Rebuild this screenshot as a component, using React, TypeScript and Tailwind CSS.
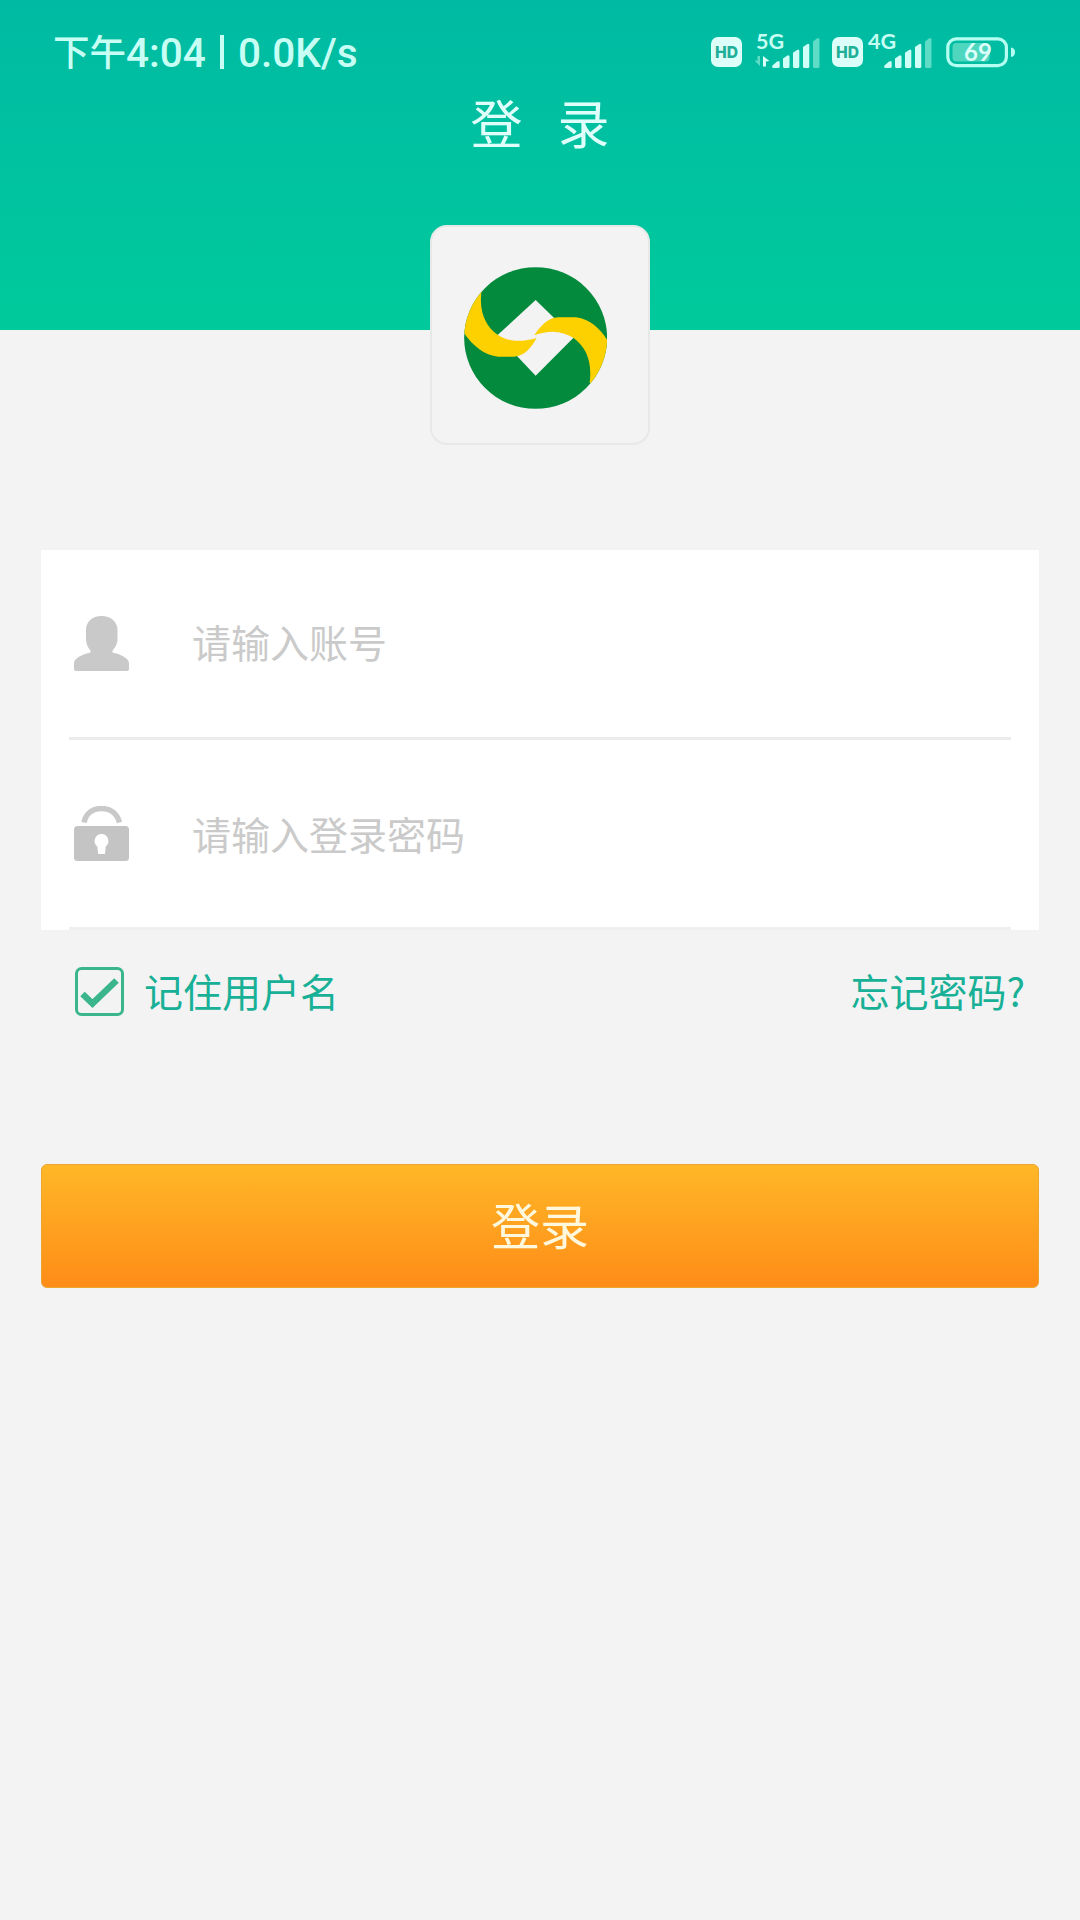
import { useState } from "react";

interface FieldProps {
  type: string;
  placeholder: string;
  icon: React.ReactNode;
}

function HdBadge() {
  return (
    <svg className="h-[30px] w-[31px] shrink-0" viewBox="0 0 31 30">
      <rect width="31" height="30" rx="7" fill="#dcfffa" />
      <text
        x="15.5"
        y="21"
        textAnchor="middle"
        textLength="23"
        lengthAdjust="spacingAndGlyphs"
        fontFamily="Inter, sans-serif"
        fontSize="16.5"
        fontWeight="800"
        fill="#1fae98"
      >
        HD
      </text>
    </svg>
  );
}

function SignalBars() {
  return (
    <svg className="h-[32px] w-[49px] shrink-0" viewBox="0 0 49 32">
      <g fill="#cffff6">
        <path d="M0.5 28.5 L5 24.5 Q7.7 23 7.7 25.5 V29.5 Q7.7 31 6.2 31 H1.5 Q-0.5 31 0.5 28.5Z" />
        <path d="M11 21.5 L15 18.8 Q17.5 17.5 17.5 20 V29.5 Q17.5 31 16 31 H12.5 Q11 31 11 29.5Z" />
        <path d="M21 15.8 L25 13 Q27.3 11.5 27.3 14 V29.5 Q27.3 31 25.8 31 H22.5 Q21 31 21 29.5Z" />
        <path d="M31 10 L35 7.2 Q37.3 5.7 37.3 8.2 V29.5 Q37.3 31 35.8 31 H32.5 Q31 31 31 29.5Z" />
      </g>
      <path
        d="M41 4.5 L45 1.5 Q47.5 0 47.5 2.5 V29.5 Q47.5 31 46 31 H42.5 Q41 31 41 29.5Z"
        fill="#5edcc6"
      />
    </svg>
  );
}

function Battery({ level }: { level: number }) {
  return (
    <svg className="h-[32px] w-[70px] shrink-0" viewBox="0 0 70 32">
      <rect x="1.8" y="2.8" width="58.6" height="26.8" rx="8.5" fill="none" stroke="#b5fff2" strokeWidth="3.2" />
      <rect x="6.5" y="7" width="37" height="18.5" rx="4" fill="#4fd6bf" />
      <path d="M65 11.5 q4 .6 4 4.7 t-4 4.7z" fill="#b5fff2" />
      <text x="32" y="25" textAnchor="middle" fontFamily="Lato, sans-serif" fontSize="24" fontWeight="700" fill="#dcfffa">
        {level}
      </text>
    </svg>
  );
}

function StatusBar() {
  return (
    <div className="flex h-[80px] items-start pl-[53px] pt-[29px] text-[#c8fff5]">
      <div className="flex h-[45px] w-[658px] items-center font-['Roboto','Noto_Sans_CJK_SC',sans-serif] font-medium">
        <span className="mt-[5px] w-[73px] text-[36.5px]">下午</span>
        <span className="mt-[3px] w-[94px] text-[40.5px]">4:04</span>
        <span className="mr-[14px] h-[34px] w-[4px] bg-[#c8fff5]" />
        <span className="mt-[3px] text-[40.5px]">0.0K/s</span>
      </div>
      <div className="flex pt-[8px]">
        <HdBadge />
        <div className="relative ml-[30px] flex">
          <span className="absolute -left-[16px] -top-[8px] font-['Lato',sans-serif] text-[21.5px] font-bold leading-[24px]">
            5G
          </span>
          <svg className="absolute -left-[18px] top-[18px] h-[12px] w-[16px]" viewBox="0 0 16 12">
            <path d="M6 1 V11 L0.5 5.5 H3.5 V1Z" fill="#5edcc6" />
            <path d="M9 11.5 V1 L15.5 6 L12 6.5 V11.5Z" fill="#dcfffa" />
          </svg>
          <SignalBars />
        </div>
        <div className="ml-[11px]">
          <HdBadge />
        </div>
        <div className="relative ml-[21px] flex">
          <span className="absolute -left-[16px] -top-[8px] font-['Lato',sans-serif] text-[21.5px] font-bold leading-[24px]">
            4G
          </span>
          <SignalBars />
        </div>
        <div className="-mt-[1px] ml-[13px]">
          <Battery level={69} />
        </div>
      </div>
    </div>
  );
}

function BankLogo() {
  return (
    <svg className="mr-[9px] mt-[5px] h-[142px] w-[143.3px]" viewBox="132 155 430 426">
      <defs>
        <clipPath id="disc">
          <ellipse cx="347" cy="368" rx="214.5" ry="212.5" />
        </clipPath>
      </defs>
      <g clipPath="url(#disc)">
        <rect x="132" y="155" width="430" height="426" fill="#038a3c" />
        <path d="M347 254 L462 366 L347 481 L232 360Z" fill="#f3f3f3" />
        <path
          d="M186 218 C174 285 196 334 233 358 C264 380 305 381 350 368 C333 398 315 422 282 424 H235 C192 421 155 388 130 350 V215Z"
          fill="#fdd000"
        />
        <path
          d="M343 360 C362 332 382 308 415 306 H468 C512 311 542 342 563 376 V505 L509 503 C517 440 500 398 462 369 C428 346 388 343 343 360Z"
          fill="#fdd000"
        />
      </g>
    </svg>
  );
}

function UserIcon() {
  return (
    <svg className="h-[55px] w-[55px]" viewBox="0 0 55 55" fill="#c9c9c9">
      <path d="M27.5 0 C37 0 43.5 6 43.5 14 V23 C43.5 28 41 32 38.5 34.5 V36.5 C46 38 55 42 55 47 V53 Q55 55 53 55 H2 Q0 55 0 53 V47 C0 42 9 38 16.5 36.5 V34.5 C14 32 12 28 12 23 V14 C12 6 18 0 27.5 0Z" />
    </svg>
  );
}

function LockIcon() {
  return (
    <svg className="h-[55px] w-[55px]" viewBox="0 0 55 55">
      <path d="M10 16.5 C12 7 19 2.5 27.5 2.5 S43 7 45.5 16.5" fill="none" stroke="#c9c9c9" strokeWidth="5.5" />
      <rect y="20" width="55" height="35" rx="3.5" fill="#c4c4c4" />
      <path d="M27.5 28 a7 7 0 0 1 4.2 12.5 L31 48 H24.2 L23.3 40.5 A7 7 0 0 1 27.5 28Z" fill="#fff" />
    </svg>
  );
}

function Field({ type, placeholder, icon }: FieldProps) {
  return (
    <label className="group flex h-[190px] items-center border-b-[3px] border-[#ececec] pl-[5px] last:border-[#efefef]">
      {icon}
      <input
        type={type}
        placeholder={placeholder}
        className="mb-[5px] ml-[63px] h-[60px] flex-1 bg-transparent text-[39px] outline-none placeholder:text-[#cacaca] group-last:mb-[2px]"
      />
    </label>
  );
}

export default function App() {
  const [remember, setRemember] = useState<boolean>(true);

  return (
    <main className="h-[1920px] w-[1080px] overflow-hidden bg-[#f3f3f3] font-['Noto_Sans_CJK_SC',sans-serif]">
      <header className="h-[330px] bg-linear-to-b from-[#00baa3] to-[#00ca9c]">
        <StatusBar />
        <h1 className="flex h-[84px] items-center justify-center gap-[35px] text-[52px] leading-none text-[#dffffa]">
          <span>登</span>
          <span>录</span>
        </h1>
        <div className="mx-auto mt-[61px] flex h-[220px] w-[220px] items-center justify-center rounded-[17px] border-2 border-[#e6e9e8] bg-[#f3f3f3]">
          <BankLogo />
        </div>
      </header>

      <form className="mx-[41px] mt-[220px]" onSubmit={(e) => e.preventDefault()}>
        <div className="h-[380px] bg-white px-[28px]">
          <Field type="text" placeholder="请输入账号" icon={<UserIcon />} />
          <Field type="password" placeholder="请输入登录密码" icon={<LockIcon />} />
        </div>

        <div className="flex h-[122px] items-center justify-between pl-[34px] pr-[14px] text-[39px] text-[#18b096]">
          <label className="flex items-center gap-[20px]">
            <input
              type="checkbox"
              checked={remember}
              onChange={(e) => setRemember(e.target.checked)}
              className="peer sr-only"
            />
            <svg className="h-[49px] w-[49px]" viewBox="0 0 49 49" fill="none" stroke="#3bb58b">
              <rect x="1.5" y="1.5" width="46" height="46" rx="5" strokeWidth="3" />
              {remember && <path d="M7.5 27 L17.5 36.5 L41.5 13.5" strokeWidth="6.5" />}
            </svg>
            <span className="mb-[2px] leading-none">记住用户名</span>
          </label>
          <a href="#" className="mb-[2px] leading-none">
            忘记密码?
          </a>
        </div>

        <button
          type="submit"
          className="mt-[112px] flex h-[124px] w-full items-center justify-center rounded-[6px] border border-[#eda52e] bg-linear-to-b from-[#ffb727] to-[#ff8c18] pb-[5px] text-[49px] leading-none text-[#fff8dc]"
        >
          登录
        </button>
      </form>
    </main>
  );
}
